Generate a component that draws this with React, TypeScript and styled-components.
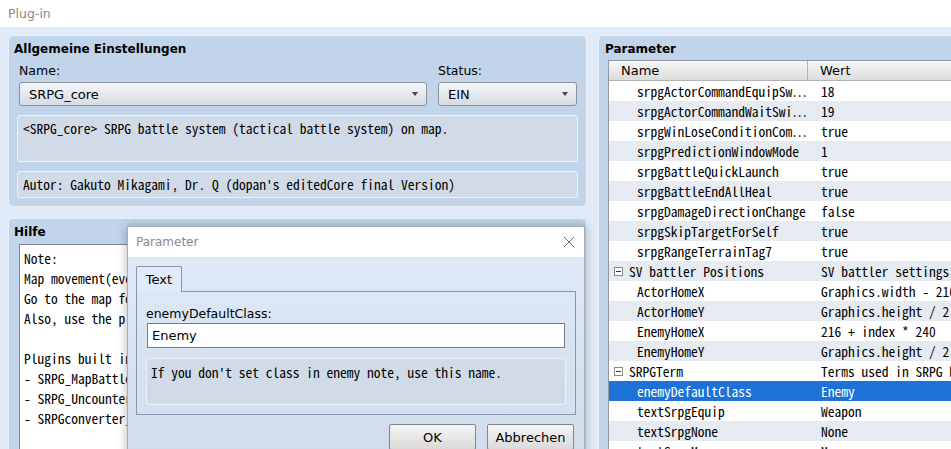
import styled, { createGlobalStyle } from 'styled-components';

const uiFont = `"DejaVu Sans", "Noto Sans", sans-serif`;
const monoFont = `"Noto Sans Mono CJK JP", "DejaVu Sans Mono", monospace`;

const GlobalStyle = createGlobalStyle`
  html, body {
    margin: 0;
    padding: 0;
    background: #e0eaf8;
    overflow: hidden;
  }
`;

const Window = styled.div`
  position: relative;
  width: 951px;
  height: 449px;
  overflow: hidden;
  background: #e0eaf8;
  font-family: ${uiFont};
  font-size: 12.5px;
  color: #000;
`;

const TitleBar = styled.div`
  height: 27px;
  background: #fff;
  display: flex;
  align-items: center;
  padding-left: 8px;
  color: #8a8a8a;
  font-size: 12.5px;
`;

const Main = styled.div`
  display: flex;
  gap: 11px;
  padding: 8px 0 0 8px;
`;

const LeftColumn = styled.div`
  width: 579px;
  flex-shrink: 0;
  display: flex;
  flex-direction: column;
  gap: 11px;
`;

const Panel = styled.section<{ $grow?: boolean }>`
  background: #c1d4ea;
  border: 1px solid #eaf1fb;
  border-radius: 5px;
  padding: 3px 8px 8px;
  box-sizing: border-box;
  ${(p) => (p.$grow ? 'height: 240px;' : '')}
`;

const ParamPanel = styled(Panel)`
  width: 380px;
  height: 430px;
  flex-shrink: 0;
  padding: 3px 0 0 9px;
  border-right: none;
`;

const PanelTitle = styled.h2`
  margin: 0 0 0 -3px;
  height: 20px;
  line-height: 20px;
  font-size: 12px;
  font-weight: bold;
`;

const FieldRow = styled.div`
  display: grid;
  grid-template-columns: 408px 139px;
  gap: 11px;
  margin: 3px 2px 0;
`;

const Field = styled.div`
  display: flex;
  flex-direction: column;
  gap: 2px;
`;

const Label = styled.label`
  height: 18px;
  line-height: 18px;
`;

const Select = styled.div`
  height: 24px;
  box-sizing: border-box;
  border: 1px solid #8d9198;
  border-radius: 3px;
  background: linear-gradient(#f4f6f9, #d6dbe2);
  display: flex;
  align-items: center;
  justify-content: space-between;
  padding: 0 8px 0 9px;
  font-size: 13px;
`;

const Caret = styled.span`
  width: 0;
  height: 0;
  border-left: 3.5px solid transparent;
  border-right: 3.5px solid transparent;
  border-top: 4px solid #444;
`;

const InfoBox = styled.div<{ $tall?: boolean }>`
  margin-top: 9px;
  height: ${(p) => (p.$tall ? 47 : 27)}px;
  box-sizing: border-box;
  background: #d1dbe7;
  border: 1px solid #eef3fa;
  border-radius: 3px;
  padding: 4px 5px;
  font-family: ${monoFont};
  font-size: 13.5px;
  line-height: 17px;
  white-space: pre;
`;

const HelpText = styled.div`
  margin: 2px 0 0 2px;
  height: 220px;
  box-sizing: border-box;
  background: #fff;
  border: 1px solid #7c8794;
  padding: 3px 4px;
  font-family: ${monoFont};
  font-size: 13.5px;
  line-height: 20px;
  white-space: pre;
  overflow: hidden;
`;

/* parameter tree table */

const Table = styled.div`
  margin-top: 1px;
  border-top: 1px solid #8f98a3;
  border-left: 1px solid #8f98a3;
  background: #fff;
  height: 400px;
  font-family: ${monoFont};
  font-size: 13.5px;
`;

const HeaderRow = styled.div`
  display: flex;
  height: 20px;
  background: linear-gradient(#f7f7f7, #dcdcdc);
  border-bottom: 1px solid #b3b3b3;
  box-sizing: border-box;
  font-family: ${uiFont};
  font-size: 13px;
`;

const HeaderCell = styled.div<{ $first?: boolean }>`
  display: flex;
  align-items: center;
  ${(p) =>
    p.$first
      ? 'width: 199px; padding-left: 12px; box-sizing: border-box; border-right: 1px solid #b3b3b3;'
      : 'padding-left: 12px;'}
`;

type Shade = 'light' | 'dark' | 'selected';

const Row = styled.div<{ $shade: Shade }>`
  display: flex;
  height: 20px;
  align-items: center;
  background: ${(p) =>
    p.$shade === 'selected' ? '#1c72d8' : p.$shade === 'dark' ? '#e6ebf2' : '#fff'};
  color: ${(p) => (p.$shade === 'selected' ? '#fff' : '#000')};
`;

const NameCell = styled.div<{ $group?: boolean }>`
  width: 199px;
  flex-shrink: 0;
  display: flex;
  align-items: center;
  gap: 6px;
  padding-left: ${(p) => (p.$group ? 5 : 28)}px;
  box-sizing: border-box;
  white-space: nowrap;
  overflow: hidden;
`;

const ValueCell = styled.div`
  padding-left: 13px;
  white-space: nowrap;
`;

const Collapse = styled.span`
  position: relative;
  width: 9px;
  height: 9px;
  box-sizing: border-box;
  border: 1px solid #8c8c8c;
  background: #fff;
  flex-shrink: 0;

  &::after {
    content: '';
    position: absolute;
    left: 1px;
    right: 1px;
    top: 3px;
    height: 1px;
    background: #333;
  }
`;

/* modal parameter editor */

const Dialog = styled.div`
  position: absolute;
  left: 127px;
  top: 226px;
  width: 458px;
  height: 240px;
  box-sizing: border-box;
  border: 1px solid #a3aebb;
  box-shadow: 0 0 10px rgba(0, 0, 0, 0.28);
  background: linear-gradient(#e1ebf9, #d0dceb);
  display: flex;
  flex-direction: column;
`;

const DialogTitle = styled.div`
  height: 30px;
  background: #fff;
  display: flex;
  align-items: center;
  justify-content: space-between;
  padding: 0 9px 0 8px;
  color: #8a8a8a;
  font-size: 12px;
`;

const DialogBody = styled.div`
  padding: 9px 8px 0;
`;

const Tab = styled.div`
  width: 46px;
  height: 26px;
  box-sizing: border-box;
  border: 1px solid #8796aa;
  border-bottom: none;
  border-radius: 2px 2px 0 0;
  background: #e0eaf8;
  position: relative;
  z-index: 1;
  margin-bottom: -1px;
  display: flex;
  align-items: center;
  justify-content: center;
  font-size: 13px;
`;

const TabPanel = styled.div`
  height: 124px;
  box-sizing: border-box;
  border: 1px solid #8796aa;
  padding: 13px 9px 0;
  display: flex;
  flex-direction: column;
`;

const TextInput = styled.div`
  height: 25px;
  margin: 0 1px;
  box-sizing: border-box;
  border: 1px solid #7a7a7a;
  background: #fff;
  display: flex;
  align-items: center;
  padding-left: 4px;
  font-size: 13px;
`;

const NoteBox = styled(InfoBox)`
  margin-top: 10px;
  padding: 5px 4px;
`;

const ButtonRow = styled.div`
  display: flex;
  justify-content: flex-end;
  gap: 11px;
  padding: 9px 2px 0 0;
`;

const Button = styled.button`
  width: 87px;
  height: 26px;
  border: 1px solid #7f8692;
  border-radius: 2px;
  background: linear-gradient(#f4f4f4, #dadada);
  font-family: ${uiFont};
  font-size: 13px;
  color: #000;
  padding: 0;
`;

const helpLines = [
  'Note:',
  'Map movement(event) and battles are handled on the map.',
  'Go to the map for SRPG battle and place actor/enemy events.',
  'Also, use the plugin command to start the battle.',
  '',
  'Plugins built in:',
  '- SRPG_MapBattle',
  '- SRPG_UncounterableAttack',
  '- SRPGconverter_MV',
];

type Param = { name: string; value: string; group?: boolean; selected?: boolean };

const params: Param[] = [
  { name: 'srpgActorCommandEquipSw⋯', value: '18' },
  { name: 'srpgActorCommandWaitSwi⋯', value: '19' },
  { name: 'srpgWinLoseConditionCom⋯', value: 'true' },
  { name: 'srpgPredictionWindowMode', value: '1' },
  { name: 'srpgBattleQuickLaunch', value: 'true' },
  { name: 'srpgBattleEndAllHeal', value: 'true' },
  { name: 'srpgDamageDirectionChange', value: 'false' },
  { name: 'srpgSkipTargetForSelf', value: 'true' },
  { name: 'srpgRangeTerrainTag7', value: 'true' },
  { name: 'SV battler Positions', value: 'SV battler settings', group: true },
  { name: 'ActorHomeX', value: 'Graphics.width - 216' },
  { name: 'ActorHomeY', value: 'Graphics.height / 2' },
  { name: 'EnemyHomeX', value: '216 + index * 240' },
  { name: 'EnemyHomeY', value: 'Graphics.height / 2' },
  { name: 'SRPGTerm', value: 'Terms used in SRPG battle', group: true },
  { name: 'enemyDefaultClass', value: 'Enemy', selected: true },
  { name: 'textSrpgEquip', value: 'Weapon' },
  { name: 'textSrpgNone', value: 'None' },
  { name: 'textSrpgMove', value: 'Move' },
];

function CloseIcon() {
  return (
    <svg width="12" height="12" viewBox="0 0 12 12">
      <path d="M1 1 L11 11 M11 1 L1 11" stroke="#6d6d6d" strokeWidth="1" fill="none" />
    </svg>
  );
}

export default function App() {
  return (
    <Window>
      <GlobalStyle />
      <TitleBar>Plug-in</TitleBar>
      <Main>
        <LeftColumn>
          <Panel>
            <PanelTitle>Allgemeine Einstellungen</PanelTitle>
            <FieldRow>
              <Field>
                <Label>Name:</Label>
                <Select>
                  SRPG_core
                  <Caret />
                </Select>
              </Field>
              <Field>
                <Label>Status:</Label>
                <Select>
                  EIN
                  <Caret />
                </Select>
              </Field>
            </FieldRow>
            <InfoBox $tall>{'<SRPG_core> SRPG battle system (tactical battle system) on map.'}</InfoBox>
            <InfoBox>{"Autor: Gakuto Mikagami, Dr. Q (dopan's editedCore final Version)"}</InfoBox>
          </Panel>
          <Panel $grow>
            <PanelTitle>Hilfe</PanelTitle>
            <HelpText>{helpLines.join('\n')}</HelpText>
          </Panel>
        </LeftColumn>

        <ParamPanel>
          <PanelTitle>Parameter</PanelTitle>
          <Table>
            <HeaderRow>
              <HeaderCell $first>Name</HeaderCell>
              <HeaderCell>Wert</HeaderCell>
            </HeaderRow>
            {params.map((p, i) => (
              <Row
                key={p.name}
                $shade={p.selected ? 'selected' : i % 2 === 1 ? 'dark' : 'light'}
              >
                <NameCell $group={p.group}>
                  {p.group && <Collapse />}
                  {p.name}
                </NameCell>
                <ValueCell>{p.value}</ValueCell>
              </Row>
            ))}
          </Table>
        </ParamPanel>
      </Main>

      <Dialog>
        <DialogTitle>
          Parameter
          <CloseIcon />
        </DialogTitle>
        <DialogBody>
          <Tab>Text</Tab>
          <TabPanel>
            <Label>enemyDefaultClass:</Label>
            <TextInput>Enemy</TextInput>
            <NoteBox $tall>{"If you don't set class in enemy note, use this name."}</NoteBox>
          </TabPanel>
          <ButtonRow>
            <Button>OK</Button>
            <Button>Abbrechen</Button>
          </ButtonRow>
        </DialogBody>
      </Dialog>
    </Window>
  );
}
